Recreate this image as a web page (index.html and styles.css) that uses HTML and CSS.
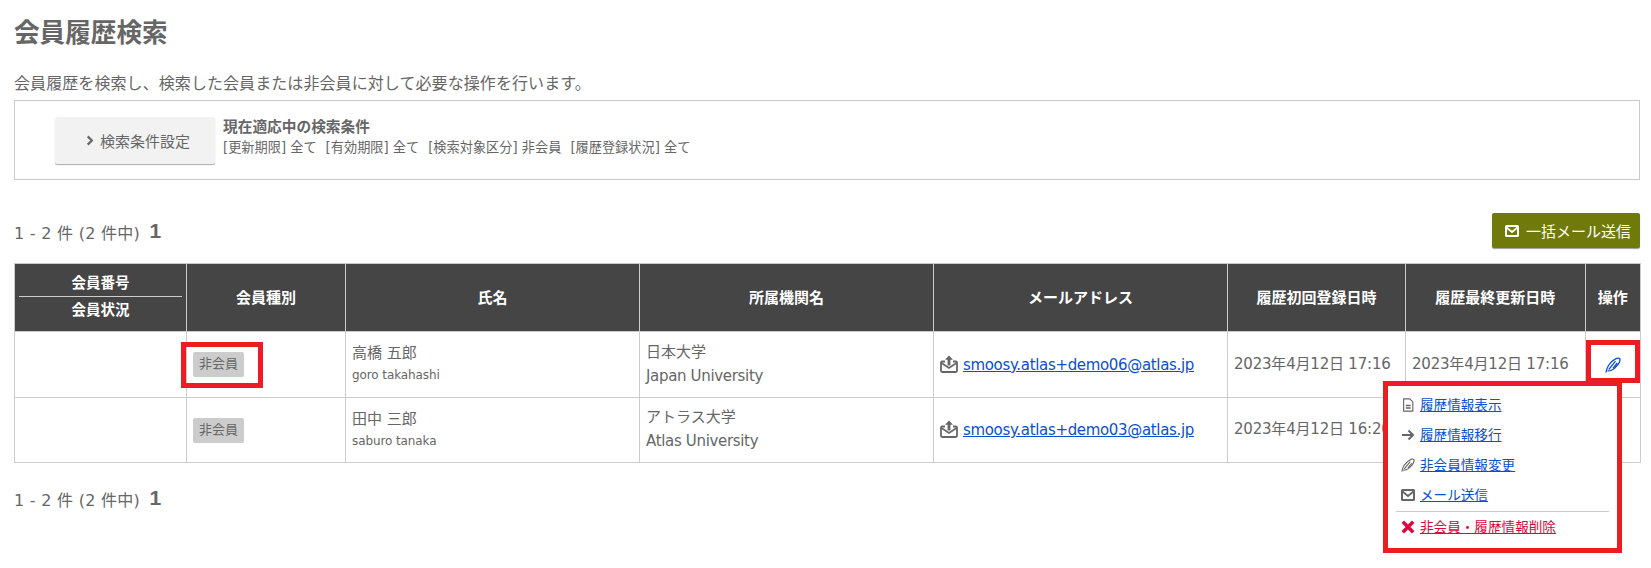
FILE: index.html
```html
<!DOCTYPE html>
<html lang="ja">
<head>
<meta charset="utf-8">
<title>会員履歴検索</title>
<link rel="stylesheet" href="styles.css">
</head>
<body>
<svg class="defs" width="0" height="0" aria-hidden="true">
  <symbol id="feather" viewBox="0 0 16 16">
    <path d="M1 15.500C1.300 13 2 11 3.500 8.500C5.500 5.500 8 3 11 1.600C12.500 1 14 1 14.800 1.800C15.300 3.500 14.600 5.500 13 7.500C11 10 8.500 12.500 6 13.500C4.800 14 3.500 14 2.500 13.800" fill="none" stroke="currentColor" stroke-width="1.300"/>
    <path d="M3.800 12.500L10.500 4.200M8 11.200L12.300 6" fill="none" stroke="currentColor" stroke-width="1.200"/>
  </symbol>
  <symbol id="mail" viewBox="0 0 14 12">
    <rect x="1" y="1" width="12" height="10" rx=".6" fill="none" stroke="currentColor" stroke-width="2"/>
    <path d="M1.500 2.500L7 7L12.500 2.500" fill="none" stroke="currentColor" stroke-width="1.800"/>
  </symbol>
  <symbol id="mailup" viewBox="0 0 18 18">
    <path d="M5 6.500H2.200C1.500 6.500 1 7 1 7.700V15.800C1 16.500 1.500 17 2.200 17H15.800C16.500 17 17 16.500 17 15.800V7.700C17 7 16.500 6.500 15.800 6.500H13" fill="none" stroke="currentColor" stroke-width="1.800"/>
    <path d="M1.500 8L9 13L16.500 8" fill="none" stroke="currentColor" stroke-width="1.600"/>
    <path d="M9 .5L5 4.700H7.600V10.500H10.400V4.700H13Z" fill="currentColor"/>
  </symbol>
</svg>

<h1 class="title">会員履歴検索</h1>
<p class="lead">会員履歴を検索し、検索した会員または非会員に対して必要な操作を行います。</p>

<section class="search">
  <button class="search-btn" type="button"><svg class="chev" viewBox="0 0 8 12"><path d="M1.500 1.500L6 6L1.500 10.500" fill="none" stroke="currentColor" stroke-width="2.400"/></svg>検索条件設定</button>
  <div class="cond">
    <div class="cond-title">現在適応中の検索条件</div>
    <div class="cond-list"><span>[更新期限] 全て</span><span>[有効期限] 全て</span><span>[検索対象区分] 非会員</span><span>[履歴登録状況] 全て</span></div>
  </div>
</section>

<div class="toolbar">
  <div class="count">1 - 2 件 (2 件中) <b>1</b></div>
  <button class="bulk" type="button"><svg class="bulk-ico"><use href="#mail"/></svg>一括メール送信</button>
</div>

<table class="list">
  <colgroup>
    <col class="c1"><col class="c2"><col class="c3"><col class="c4"><col class="c5"><col class="c6"><col class="c7"><col class="c8">
  </colgroup>
  <thead>
    <tr>
      <th class="stack"><div class="top">会員番号</div><div>会員状況</div></th>
      <th>会員種別</th>
      <th>氏名</th>
      <th>所属機関名</th>
      <th>メールアドレス</th>
      <th>履歴初回登録日時</th>
      <th>履歴最終更新日時</th>
      <th>操作</th>
    </tr>
  </thead>
  <tbody>
    <tr>
      <td></td>
      <td class="kind"><span class="badge">非会員</span><i class="mark mark-badge"></i></td>
      <td><div>高橋 五郎</div><div class="sub">goro takahashi</div></td>
      <td><div>日本大学</div><div class="en">Japan University</div></td>
      <td class="mailcell"><svg class="mail-ico"><use href="#mailup"/></svg><a href="#">smoosy.atlas+demo06@atlas.jp</a></td>
      <td class="date">2023年4月12日 17:16</td>
      <td class="date">2023年4月12日 17:16</td>
      <td class="op">
        <svg class="op-ico"><use href="#feather"/></svg>
        <i class="mark mark-op"></i>
        <div class="menu">
          <a class="item" href="#"><svg class="ico" viewBox="0 0 14 16"><path d="M2 1H9L12.500 4.500V15H2Z" fill="none" stroke="currentColor" stroke-width="1.300"/><path d="M4.500 8.500H10M4.500 11.500H10" stroke="currentColor" stroke-width="1.600"/></svg><span>履歴情報表示</span></a>
          <a class="item" href="#"><svg class="ico" viewBox="0 0 14 14"><path d="M1 7H12M7.500 2.500L12 7L7.500 11.500" fill="none" stroke="currentColor" stroke-width="2"/></svg><span>履歴情報移行</span></a>
          <a class="item" href="#"><svg class="ico"><use href="#feather"/></svg><span>非会員情報変更</span></a>
          <a class="item" href="#"><svg class="ico"><use href="#mail"/></svg><span>メール送信</span></a>
          <hr class="sep">
          <a class="item del" href="#"><svg class="ico" viewBox="0 0 14 14"><path d="M1.800 1.800L12.200 12.200M12.200 1.800L1.800 12.200" stroke="currentColor" stroke-width="3.400"/></svg><span>非会員・履歴情報削除</span></a>
        </div>
      </td>
    </tr>
    <tr>
      <td></td>
      <td class="kind"><span class="badge">非会員</span></td>
      <td><div>田中 三郎</div><div class="sub">saburo tanaka</div></td>
      <td><div>アトラス大学</div><div class="en">Atlas University</div></td>
      <td class="mailcell"><svg class="mail-ico"><use href="#mailup"/></svg><a href="#">smoosy.atlas+demo03@atlas.jp</a></td>
      <td class="date">2023年4月12日 16:20</td>
      <td class="date">2023年4月12日 16:20</td>
      <td class="op"></td>
    </tr>
  </tbody>
</table>

<div class="count count-bottom">1 - 2 件 (2 件中) <b>1</b></div>
</body>
</html>
```

FILE: styles.css
```css
* { box-sizing: border-box; }
html, body { margin: 0; height: 568px; overflow: hidden; }
body {
  padding: 0 11px 0 14px;
  background: #fff;
  color: #666;
  font-family: "DejaVu Sans", "Noto Sans CJK JP", sans-serif;
  font-size: 15px;
}
.defs { position: absolute; }
.title {
  margin: 0;
  padding-top: 17px;
  height: 65px;
  font-size: 25.600px;
  line-height: 32px;
  font-weight: 700;
}
.lead { margin: 0; height: 35px; font-size: 16px; line-height: 37px; letter-spacing: .08px; }

.search {
  display: flex;
  align-items: flex-start;
  height: 80px;
  padding: 16px 0 0 40px;
  border: 1px solid #ccc;
  gap: 8px;
}
.search-btn {
  display: flex;
  justify-content: center;
  align-items: center;
  width: 160px;
  height: 47px;
  padding: 0 0 0 6px;
  border: 0;
  border-radius: 2px;
  background: #f2f2f2;
  box-shadow: 0 1px 1px #aaa;
  color: #666;
  font: inherit;
  font-size: 15px;
}
.chev { width: 8px; height: 11px; margin-right: 6px; }
.cond-title { font-size: 14.700px; font-weight: 700; line-height: 20px; }
.cond-list { display: flex; gap: 9px; margin-top: 1px; font-size: 13.200px; line-height: 19px; }

.toolbar {
  display: flex;
  justify-content: space-between;
  align-items: flex-start;
  height: 83px;
  padding-top: 33px;
}
.count { font-size: 16px; line-height: 24px; padding-top: 7px; letter-spacing: .28px; }
.count b { font-size: 21px; margin-left: 4px; position: relative; top: -1px; font-family: "Liberation Sans", sans-serif; }
.bulk {
  display: flex;
  align-items: center;
  height: 35px;
  width: 148px;
  padding: 0 0 0 13px;
  border: 0;
  border-radius: 2px;
  background: #6f7a0a;
  box-shadow: 0 1px 1px #999;
  color: #fff;
  font: inherit;
}
.bulk-ico { width: 14px; height: 12px; margin-right: 7px; }

.list {
  width: 1626px;
  border-collapse: collapse;
  table-layout: fixed;
  border: 1px solid #ccc;
}
.c1 { width: 172px; }
.c2 { width: 159px; }
.c3, .c4, .c5 { width: 294px; }
.c6 { width: 178px; }
.c7 { width: 179.500px; }
.c8 { width: 55.500px; }

.list th {
  height: 68px;
  padding: 0 0 2px;
  border: 1px solid #ccc;
  background: #454545;
  color: #fff;
  font-size: 15px;
  font-weight: 700;
  text-align: center;
}
.list .stack { padding: 0 4px 2px; font-size: 14.500px; line-height: 26px; }
.top { border-bottom: 1px solid #ccc; }
.list td {
  height: 66px;
  padding: 0 6px 2px;
  border: 1px solid #ccc;
  font-size: 15px;
  line-height: 24px;
  vertical-align: middle;
  white-space: nowrap;
}
.list tbody tr:last-child td { height: 65px; }
.list .mailcell, .list .kind, .list .op { padding-bottom: 0; }
.sub { font-size: 12px; line-height: 21px; letter-spacing: -.1px; }
.en { letter-spacing: -.33px; }
.date { letter-spacing: -.2px; }
.kind { position: relative; }
.badge {
  display: inline-block;
  width: 51px;
  height: 25px;
  border-radius: 2px;
  background: #ccc;
  font-size: 13px;
  line-height: 23px;
  text-align: center;
  vertical-align: middle;
}
.mailcell a { color: #0a4fd0; letter-spacing: -.33px; }
.mail-ico { width: 18px; height: 18px; margin-right: 5px; vertical-align: -3px; color: #666; }

.op { position: relative; text-align: center; color: #0a4fd0; }
.op-ico { width: 16px; height: 16px; vertical-align: middle; }
.mark { position: absolute; border: 5px solid #ed1c24; pointer-events: none; }
.mark-badge { left: -6px; top: 10px; width: 82px; height: 46px; }
.mark-op { left: 0; top: 8px; width: 54px; height: 43px; }

.menu {
  position: absolute;
  z-index: 2;
  right: 18px;
  top: 49px;
  display: flex;
  flex-direction: column;
  width: 239px;
  height: 172px;
  padding: 4px 8px 0 8px;
  border: 5px solid #ed1c24;
  background: #fff;
  text-align: left;
}
.item {
  display: flex;
  align-items: center;
  height: 30px;
  padding-left: 5px;
  color: #0a4fd0;
  font-size: 13.600px;
}
.item .ico { width: 14px; height: 14px; margin-right: 5px; color: #666; flex: none; }
.sep { width: 100%; margin: 1px 0 0; border: 0; border-top: 1px solid #ccc; }
.del, .del .ico { color: #e0043c; }

.count-bottom { padding-top: 24px; }
```
